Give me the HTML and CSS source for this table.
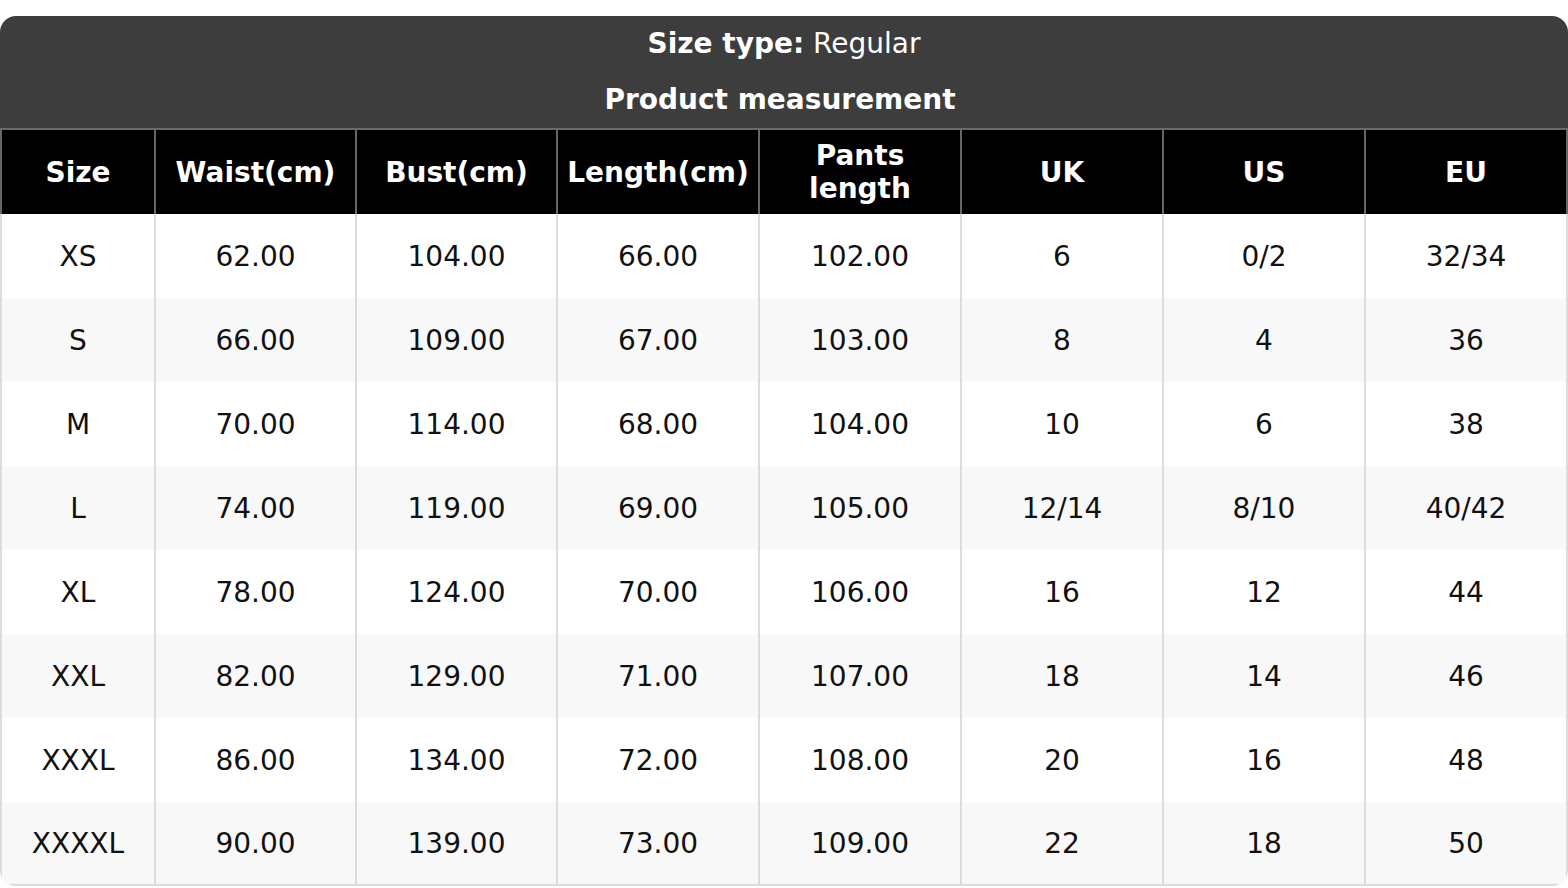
FILE: index.html
```html
<!DOCTYPE html>
<html>
<head>
<meta charset="utf-8">
<link rel="stylesheet" href="styles.css">
</head>
<body>
<div class="chart">
  <div class="title">
    <div class="title-line"><b>Size type:</b> Regular</div>
    <div class="title-line title-sub"><b>Product measurement</b></div>
  </div>
  <table class="sizes">
    <colgroup>
      <col class="c1"><col class="c2"><col class="c2"><col class="c3"><col class="c3"><col class="c3"><col class="c3"><col>
    </colgroup>
    <thead>
      <tr><th>Size</th><th>Waist(cm)</th><th>Bust(cm)</th><th>Length(cm)</th><th>Pants<br>length</th><th>UK</th><th>US</th><th>EU</th></tr>
    </thead>
    <tbody>
      <tr><td>XS</td><td>62.00</td><td>104.00</td><td>66.00</td><td>102.00</td><td>6</td><td>0/2</td><td>32/34</td></tr>
      <tr><td>S</td><td>66.00</td><td>109.00</td><td>67.00</td><td>103.00</td><td>8</td><td>4</td><td>36</td></tr>
      <tr><td>M</td><td>70.00</td><td>114.00</td><td>68.00</td><td>104.00</td><td>10</td><td>6</td><td>38</td></tr>
      <tr><td>L</td><td>74.00</td><td>119.00</td><td>69.00</td><td>105.00</td><td>12/14</td><td>8/10</td><td>40/42</td></tr>
      <tr><td>XL</td><td>78.00</td><td>124.00</td><td>70.00</td><td>106.00</td><td>16</td><td>12</td><td>44</td></tr>
      <tr><td>XXL</td><td>82.00</td><td>129.00</td><td>71.00</td><td>107.00</td><td>18</td><td>14</td><td>46</td></tr>
      <tr><td>XXXL</td><td>86.00</td><td>134.00</td><td>72.00</td><td>108.00</td><td>20</td><td>16</td><td>48</td></tr>
      <tr><td>XXXXL</td><td>90.00</td><td>139.00</td><td>73.00</td><td>109.00</td><td>22</td><td>18</td><td>50</td></tr>
    </tbody>
  </table>
</div>
</body>
</html>
```
FILE: styles.css
```css
html, body {
  margin: 0;
  padding: 0;
  background: #fff;
}
body {
  padding-top: 16px;
  font-family: "DejaVu Sans", "Liberation Sans", sans-serif;
  font-size: 28px;
  line-height: 33px;
  color: #111;
}
.chart {
  width: 1568px;
  border-radius: 16px;
  overflow: hidden;
  background: #fff;
}
.title {
  background: #3d3d3d;
  color: #fff;
  text-align: center;
  padding: 11px 0 12px;
  border-bottom: 2px solid #6a6a6a;
}
.title-line {
  height: 33px;
}
.title-sub {
  margin-top: 23px;
  padding-right: 8px;
}
.sizes {
  width: 100%;
  table-layout: fixed;
  border-collapse: separate;
  border-spacing: 0;
}
.c1 { width: 154px; }
.c2 { width: 201px; }
.c3 { width: 202px; }
.sizes th {
  background: #000;
  color: #fff;
  font-weight: bold;
  height: 84px;
  padding: 0;
  border-left: 2px solid #666;
  text-align: center;
  vertical-align: middle;
  box-sizing: border-box;
}
.sizes th:last-child {
  border-right: 2px solid #666;
}
.sizes td {
  height: 84px;
  padding: 0;
  text-align: center;
  vertical-align: middle;
  border-left: 2px solid #dcdcdc;
  box-sizing: border-box;
}
.sizes td:last-child {
  border-right: 2px solid #dcdcdc;
}
.sizes tbody tr:nth-child(even) td {
  background: #f8f8f8;
}
.sizes tbody tr:last-child td {
  border-bottom: 2px solid #dcdcdc;
}
```
